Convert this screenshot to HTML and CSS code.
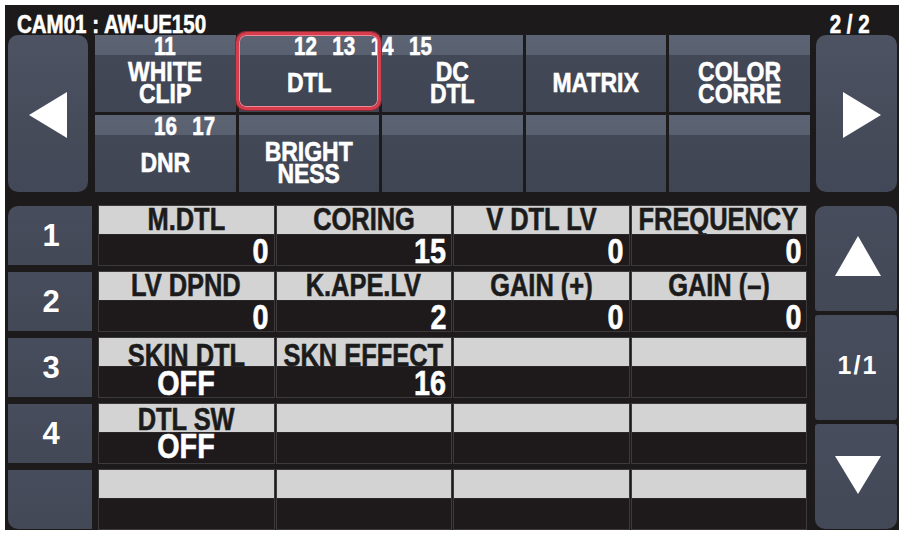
FILE: index.html
```html
<!DOCTYPE html>
<html lang="en">
<head>
<meta charset="utf-8">
<title>CAM01 : AW-UE150 - DTL</title>
<link rel="stylesheet" href="styles.css">
</head>
<body>
<div class="screen">
  <header class="topbar">
    <span class="cx cx-l">CAM01 : AW-UE150</span>
    <span class="cx cx-r">2 / 2</span>
  </header>

  <section class="menu">
    <div class="nav nav-left">
      <svg width="38" height="46" viewBox="0 0 38 46"><polygon points="38,0 38,46 0,23" fill="#ffffff"/></svg>
    </div>
    <div class="menu-grid">
      <div class="mbtn"><span class="tag"><span class="cx cx-l">11</span></span><span class="mlabel"><span class="cx">WHITE<br>CLIP</span></span></div>
      <div class="mbtn"><span class="tag tag-wide"><span class="cx cx-l">12 13 14 15</span></span><span class="mlabel"><span class="cx">DTL</span></span><span class="focus"></span></div>
      <div class="mbtn"><span class="mlabel"><span class="cx">DC<br>DTL</span></span></div>
      <div class="mbtn"><span class="mlabel"><span class="cx">MATRIX</span></span></div>
      <div class="mbtn"><span class="mlabel"><span class="cx">COLOR<br>CORRE</span></span></div>
      <div class="mbtn"><span class="tag"><span class="cx cx-l">16 17</span></span><span class="mlabel"><span class="cx">DNR</span></span></div>
      <div class="mbtn"><span class="mlabel"><span class="cx">BRIGHT<br>NESS</span></span></div>
      <div class="mbtn"></div>
      <div class="mbtn"></div>
      <div class="mbtn"></div>
    </div>
    <div class="nav nav-right">
      <svg width="38" height="46" viewBox="0 0 38 46"><polygon points="0,0 0,46 38,23" fill="#ffffff"/></svg>
    </div>
  </section>

  <section class="params">
    <div class="rownums">
      <div class="num">1</div>
      <div class="num">2</div>
      <div class="num">3</div>
      <div class="num">4</div>
      <div class="num"></div>
    </div>

    <div class="pgrid">
      <div class="cell"><div class="lbl"><span class="cx">M.DTL</span></div><div class="val"><span class="cx cx-r">0</span></div></div>
      <div class="cell"><div class="lbl"><span class="cx">CORING</span></div><div class="val"><span class="cx cx-r">15</span></div></div>
      <div class="cell"><div class="lbl"><span class="cx">V DTL LV</span></div><div class="val"><span class="cx cx-r">0</span></div></div>
      <div class="cell"><div class="lbl"><span class="cx">FREQUENCY</span></div><div class="val"><span class="cx cx-r">0</span></div></div>

      <div class="cell"><div class="lbl"><span class="cx">LV DPND</span></div><div class="val"><span class="cx cx-r">0</span></div></div>
      <div class="cell"><div class="lbl"><span class="cx">K.APE.LV</span></div><div class="val"><span class="cx cx-r">2</span></div></div>
      <div class="cell"><div class="lbl"><span class="cx">GAIN (+)</span></div><div class="val"><span class="cx cx-r">0</span></div></div>
      <div class="cell"><div class="lbl"><span class="cx">GAIN (&ndash;)</span></div><div class="val"><span class="cx cx-r">0</span></div></div>

      <div class="cell"><div class="lbl lbl-low"><span class="cx">SKIN DTL</span></div><div class="val val-center"><span class="cx">OFF</span></div></div>
      <div class="cell"><div class="lbl lbl-low"><span class="cx">SKN EFFECT</span></div><div class="val"><span class="cx cx-r">16</span></div></div>
      <div class="cell"><div class="lbl"></div><div class="val"></div></div>
      <div class="cell"><div class="lbl"></div><div class="val"></div></div>

      <div class="cell"><div class="lbl lbl-mid"><span class="cx">DTL SW</span></div><div class="val val-center val-up"><span class="cx">OFF</span></div></div>
      <div class="cell"><div class="lbl"></div><div class="val"></div></div>
      <div class="cell"><div class="lbl"></div><div class="val"></div></div>
      <div class="cell"><div class="lbl"></div><div class="val"></div></div>

      <div class="cell"><div class="lbl"></div><div class="val"></div></div>
      <div class="cell"><div class="lbl"></div><div class="val"></div></div>
      <div class="cell"><div class="lbl"></div><div class="val"></div></div>
      <div class="cell"><div class="lbl"></div><div class="val"></div></div>
    </div>

    <div class="pager">
      <div class="pbtn pbtn-top">
        <svg width="46" height="40" viewBox="0 0 46 40"><polygon points="23,0 46,40 0,40" fill="#ffffff"/></svg>
      </div>
      <div class="pbtn pbtn-mid"><span class="pcount">1/1</span></div>
      <div class="pbtn pbtn-bottom">
        <svg width="46" height="38" viewBox="0 0 46 38"><polygon points="0,0 46,0 23,38" fill="#ffffff"/></svg>
      </div>
    </div>
  </section>
</div>
</body>
</html>
```

FILE: styles.css
```css
* { box-sizing: border-box; }

html, body {
  margin: 0;
  padding: 0;
  background: #ffffff;
}

body {
  width: 904px;
  height: 534px;
  overflow: hidden;
  font-family: "Liberation Sans", Arial, sans-serif;
  font-weight: bold;
}

/* condensed, heavy lettering (the panel uses a narrow face) */
.cx {
  display: inline-block;
  white-space: nowrap;
  transform: scaleX(0.82);
  transform-origin: center center;
  -webkit-text-stroke: 0.6px currentColor;
}
.cx-l { transform-origin: left center; }
.cx-r { transform-origin: right center; }

.screen {
  margin: 5px 0 0 5px;
  width: 894px;
  height: 525px;
  background: #1d1a1b;
  padding: 0 2px 0 3px;
  display: flex;
  flex-direction: column;
}

/* header */
.topbar {
  height: 30px;
  padding: 6px 27px 0 9px;
  display: flex;
  justify-content: space-between;
  color: #ffffff;
  font-size: 25px;
  line-height: 26px;
  white-space: nowrap;
}

/* top menu */
.menu {
  height: 157px;
  display: flex;
}

.nav {
  display: flex;
  align-items: center;
  justify-content: center;
  background: linear-gradient(to bottom, #4d5363 0%, #454b59 60%, #424857 100%);
  border-radius: 10px;
}

.nav-left { width: 80px; margin-right: 7px; }
.nav-left svg { margin-left: 0; margin-top: 2px; }
.nav-right { width: 81px; margin-left: 6px; }
.nav-right svg { margin-left: 10px; margin-top: 2px; }

.menu-grid {
  width: 715px;
  display: grid;
  grid-template-columns: repeat(5, 1fr);
  grid-template-rows: 77px 77px;
  gap: 3px 3px;
}

.mbtn {
  position: relative;
  display: flex;
  flex-direction: column;
  background: linear-gradient(to bottom, #5c6373 0, #596070 20px, #434857 20px, #3f4553 100%);
}

.mlabel {
  flex: 1;
  margin-top: 20px;
  display: flex;
  align-items: center;
  justify-content: center;
  text-align: center;
  color: #ffffff;
  font-size: 28px;
  line-height: 22px;
  padding-bottom: 2px;
}

.tag {
  position: absolute;
  top: 0;
  left: 59px;
  color: #ffffff;
  font-size: 25px;
  line-height: 22px;
  word-spacing: 12px;
  white-space: nowrap;
  z-index: 2;
}

.tag-wide { left: 55px; }

.focus {
  position: absolute;
  left: -3px;
  top: -3px;
  right: -2px;
  bottom: 2px;
  border: 3px solid #d63c4c;
  border-radius: 10px;
  box-shadow: inset 0 0 0 1px #ec8a96, 0 0 0 1px #8a2a34;
  z-index: 3;
  pointer-events: none;
}

/* parameter area */
.params {
  margin-top: 14px;
  height: 323px;
  display: flex;
}

.rownums {
  width: 84px;
  margin-right: 7px;
  display: flex;
  flex-direction: column;
  gap: 7px;
}

.num {
  height: 59px;
  background: linear-gradient(to bottom, #474d5c, #424856);
  color: #ffffff;
  font-size: 31px;
  line-height: 59px;
  text-align: center;
  padding-left: 2px;
}

.num:first-child { border-top-left-radius: 10px; }
.num:last-child { border-bottom-left-radius: 10px; }

.pgrid {
  width: 707px;
  display: grid;
  grid-template-columns: repeat(4, 1fr);
  grid-template-rows: repeat(5, 59px);
  gap: 7px 3px;
}

.cell {
  display: grid;
  grid-template-rows: 28px 31px;
  min-width: 0;
  box-shadow: 0 0 0 1px #3c3a3b;
}

.lbl {
  display: flex;
  justify-content: center;
  align-items: flex-start;
  background: #d3d3d3;
  color: #1b1b1b;
  font-size: 31px;
  line-height: 28px;
  overflow: hidden;
  min-width: 0;
}

.lbl-low { line-height: 35px; }
.lbl-mid { line-height: 31px; }

.val {
  display: flex;
  justify-content: flex-end;
  align-items: flex-start;
  background: #1e1a1b;
  color: #ffffff;
  font-size: 35px;
  line-height: 31px;
  padding-right: 5px;
  border-top: 1px solid #2a2627;
  min-width: 0;
}

.val-center { justify-content: center; padding-right: 0; }
.val-up { line-height: 26px; }

.pager {
  width: 82px;
  margin-left: 9px;
  display: flex;
  flex-direction: column;
  gap: 4px;
}

.pbtn {
  flex: 1;
  display: flex;
  align-items: center;
  justify-content: center;
  background: linear-gradient(to bottom, #474d5c, #424856);
  border-radius: 3px;
}

.pbtn-top { border-radius: 10px 10px 3px 3px; }
.pbtn-bottom { border-radius: 3px 3px 10px 10px; }
.pbtn-top svg { margin-top: -6px; margin-left: 4px; }
.pbtn-bottom svg { margin-top: -4px; margin-left: 4px; }

.pcount {
  color: #ffffff;
  font-size: 25px;
  letter-spacing: 2px;
  margin-left: 4px;
  margin-top: -4px;
}
```
